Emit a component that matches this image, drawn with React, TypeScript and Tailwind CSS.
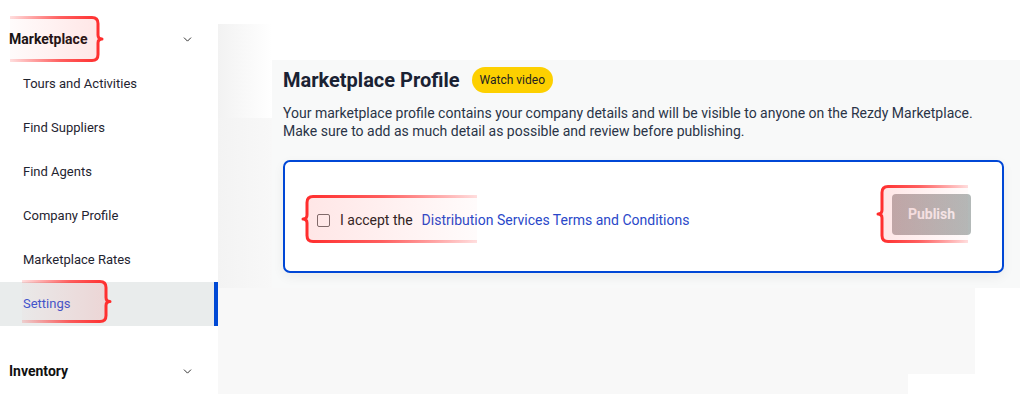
import { ChevronDown } from "lucide-react";

const sideItems = [
  "Tours and Activities",
  "Find Suppliers",
  "Find Agents",
  "Company Profile",
  "Marketplace Rates",
];

// red curly-brace marker drawn over a region
function Brace({ w, h, side, id }: { w: number; h: number; side: "left" | "right"; id: string }) {
  const r = side === "right";
  const e = r ? w - 4 : 4;
  const c = r ? w - 10 : 10;
  const tip = r ? w : 0;
  const m = h / 2;
  const d = `M${r ? 0 : w} 1.5 H${c} Q${e} 1.5 ${e} 7.5 V${m - 4} Q${e} ${m} ${tip} ${m} Q${e} ${m} ${e} ${m + 4} V${h - 7.5} Q${e} ${h - 1.5} ${c} ${h - 1.5} H${r ? 0 : w}`;
  return (
    <svg width={w} height={h} viewBox={`0 0 ${w} ${h}`} className="overflow-visible">
      <defs>
        <linearGradient id={`s${id}`} x1={r ? "0" : "1"} x2={r ? "1" : "0"} y1="0" y2="0">
          <stop offset="0" stopColor="#ff2b2b" stopOpacity="0.15" />
          <stop offset="0.55" stopColor="#ff2b2b" stopOpacity="0.75" />
          <stop offset="1" stopColor="#ff2b2b" stopOpacity="1" />
        </linearGradient>
        <linearGradient id={`f${id}`} x1={r ? "0" : "1"} x2={r ? "1" : "0"} y1="0" y2="0">
          <stop offset="0" stopColor="#ff4040" stopOpacity="0.02" />
          <stop offset="1" stopColor="#ff4040" stopOpacity="0.13" />
        </linearGradient>
      </defs>
      <rect x={r ? 0 : 4} y="1.5" width={w - 4} height={h - 3} fill={`url(#f${id})`} />
      <path d={d} fill="none" stroke={`url(#s${id})`} strokeWidth="3" strokeLinejoin="round" />
    </svg>
  );
}

export default function App() {
  return (
    <div className="flex w-[1032px] h-[394px] overflow-hidden bg-white font-['Roboto',sans-serif] text-[#1c2331]">
      {/* sidebar */}
      <aside className="relative w-[218px] shrink-0 pt-[17px]">
        <div className="relative flex items-center justify-between h-[45px] pl-[9px] pr-[24px]">
          <span className="text-[14px] font-bold text-[#111]">Marketplace</span>
          <ChevronDown size={13} strokeWidth={1.75} className="text-[#2a2a2a]" />
          <div className="absolute left-[10px] top-[-1px]">
            <Brace w={92} h={46} side="right" id="a" />
          </div>
        </div>
        {sideItems.map((t) => (
          <div key={t} className="flex items-center h-11 pl-[23px] text-[13px] text-[#1f2430]">
            {t}
          </div>
        ))}
        <div className="relative flex items-center h-11 pl-[23px] pr-1 text-[13px] text-[#3a55d0] bg-[#e9ecec] border-r-4 border-[#0049d5]">
          Settings
          <div className="absolute left-[22px] top-[-2px]">
            <Brace w={88} h={43} side="right" id="b" />
          </div>
        </div>
        <div className="flex items-center justify-between h-11 mt-[23px] pl-[9px] pr-[24px]">
          <span className="text-[14px] font-bold text-[#111]">Inventory</span>
          <ChevronDown size={13} strokeWidth={1.75} className="text-[#2a2a2a]" />
        </div>
      </aside>

      {/* main */}
      <main className="flex-1 pt-6">
        <div className="flex h-[264px]">
          <div className="w-[54px] flex flex-col">
            <div className="h-[94px] bg-gradient-to-r from-[#f2f2f2] to-white" />
            <div className="flex-1 bg-gradient-to-r from-[#f3f3f3] to-[#f8f8f8]" />
          </div>
          <div className="w-[748px] flex flex-col">
            <div className="h-9 bg-white" />
            <section className="flex-1 bg-[#f8f9f9] pl-[11px] pr-4">
              <div className="flex items-center gap-3 pt-[5px]">
                <h1 className="text-[20px] font-bold text-[#1a2233] leading-[30px]">Marketplace Profile</h1>
                <span className="flex items-center h-[26px] px-2 rounded-full bg-[#fdd000] text-[12px] text-[#222]">
                  Watch video
                </span>
              </div>
              <p className="mt-[9px] text-[14px] leading-[18px] text-[#2a3447]">
                Your marketplace profile contains your company details and will be visible to anyone on the Rezdy Marketplace.
                <br />
                Make sure to add as much detail as possible and review before publishing.
              </p>
              <div className="mt-5 h-[113px] flex items-center justify-between border-2 border-[#0047d6] rounded-[7px] bg-white pl-[32px] pr-[31px] shadow-[0_4px_12px_rgba(0,0,0,0.06)]">
                <div className="relative flex items-center mt-[7px] text-[14px]">
                  <span className="w-[13px] h-[13px] rounded-[2px] border border-[#6f6f6f] bg-white" />
                  <span className="ml-[10px] text-[#222]">I accept the</span>
                  <a className="ml-[9px] text-[#2a48c9]">Distribution Services Terms and Conditions</a>
                  <div className="absolute left-[-14px] top-[-15px]">
                    <Brace w={174} h={48} side="left" id="c" />
                  </div>
                </div>
                <div className="relative mt-[-4px]">
                  <button className="w-[79px] h-[41px] rounded-[4px] bg-gradient-to-r from-[#b8b3b4] to-[#b3b9b8] text-[14px] font-bold text-[#f4ecee]">
                    Publish
                  </button>
                  <div className="absolute left-[-14px] top-[-9px]">
                    <Brace w={90} h={58} side="left" id="d" />
                  </div>
                </div>
              </div>
            </section>
          </div>
        </div>
        <div className="w-[757px] h-[86px] bg-[#f8f8f8]" />
        <div className="w-[690px] h-5 bg-[#f8f8f8]" />
      </main>
    </div>
  );
}
